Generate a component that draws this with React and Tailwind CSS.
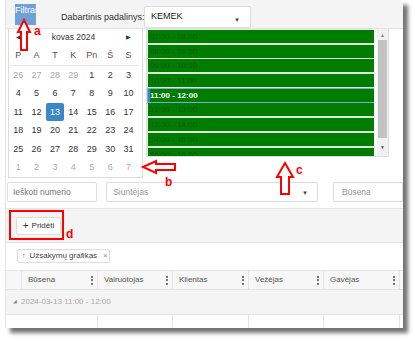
import React from "react";

const weekDays = ["P", "A", "T", "K", "Pn", "Š", "S"];

const days = [
  [26, 27, 28, 29, 1, 2, 3].map((d, i) => ({ d, muted: i < 4 })),
  [4, 5, 6, 7, 8, 9, 10].map((d) => ({ d })),
  [11, 12, 13, 14, 15, 16, 17].map((d) => ({ d, sel: d === 13 })),
  [18, 19, 20, 21, 22, 23, 24].map((d) => ({ d })),
  [25, 26, 27, 28, 29, 30, 31].map((d) => ({ d })),
  [1, 2, 3, 4, 5, 6, 7].map((d) => ({ d, muted: true })),
];

const slots = [
  "07:00 - 08:00",
  "08:00 - 09:00",
  "09:00 - 10:00",
  "10:00 - 11:00",
  "11:00 - 12:00",
  "12:00 - 13:00",
  "13:00 - 14:00",
  "14:00 - 15:00",
  "15:00 - 16:00",
];

const columns = [
  { name: "Būsena", w: "w-[76px]" },
  { name: "Vairuotojas", w: "w-[75px]" },
  { name: "Klientas", w: "w-[76px]" },
  { name: "Vežėjas", w: "w-[75px]" },
  { name: "Gavėjas", w: "w-[76px]" },
];

function Dots() {
  return (
    <span className="flex flex-col gap-[1.5px] mr-[4px]">
      <span className="w-[2px] h-[2px] bg-[#777]" />
      <span className="w-[2px] h-[2px] bg-[#777]" />
      <span className="w-[2px] h-[2px] bg-[#777]" />
    </span>
  );
}

function Caret() {
  return <span className="text-[6px] text-[#444] leading-none">▼</span>;
}

export default function App() {
  return (
    <div
      className="relative w-[415px] h-[341px] bg-white overflow-hidden"
      style={{ fontFamily: '"Liberation Sans", Arial, sans-serif' }}
    >
      {/* SCREENSHOT FRAME */}
      <div className="ml-[5px] w-[398px] h-[328px] bg-white flex flex-col overflow-hidden shadow-[5px_5px_4px_rgba(0,0,0,0.55)] border-l border-[#e4e4e4]">
        {/* TOP BAR */}
        <div className="h-[29px] shrink-0 bg-[#f4f4f4] border-b border-[#e2e2e2] flex items-start">
          <div className="ml-[9px] mt-[4px] w-[21px] h-[21px] bg-[#6fa1d9] overflow-hidden">
            <span className="block text-white text-[9px] leading-[12px] whitespace-nowrap">Filtrai</span>
          </div>
          <span className="ml-[25px] mt-[11px] w-[83px] whitespace-nowrap text-[9px] text-[#333] leading-[12px]">Dabartinis padalinys:</span>
          <div className="mt-[6px] w-[107px] h-[22px] bg-white border border-[#ddd] rounded-[2px] flex items-center justify-between px-[6px]">
            <span className="text-[9px] text-[#222]">KEMEK</span>
            <span className="mr-[4px]">
              <Caret />
            </span>
          </div>
        </div>

        {/* CALENDAR + TIME SLOTS */}
        <div className="flex items-start h-[152px] shrink-0">
          <div className="ml-[2px] w-[135px] h-[149px] border border-t-0 border-[#ddd] pr-[4px]">
            <div className="h-[17px] flex items-center justify-between px-[7px] text-[8.5px] text-[#333]">
              <span className="text-[6px]">◀</span>
              <span>kovas 2024</span>
              <span className="text-[6px]">▶</span>
            </div>
            <div className="h-[20px] grid grid-cols-[repeat(7,18.4px)] items-center border-b border-[#e6e6e6] text-[9px] text-[#555]">
              {weekDays.map((w) => (
                <span key={w} className="text-center">{w}</span>
              ))}
            </div>
            <div className="grid grid-cols-[repeat(7,18.4px)] auto-rows-[18.5px]">
              {days.flat().map((c, i) => (
                <div key={i} className="flex items-center justify-center">
                  <span
                    className={
                      c.sel
                        ? "w-[18px] h-[18px] rounded-[2px] bg-[#3d86c8] text-white text-[9px] flex items-center justify-center"
                        : c.muted
                        ? "text-[9px] text-[#aaa]"
                        : "text-[9px] text-[#333]"
                    }
                  >
                    {c.d}
                  </span>
                </div>
              ))}
            </div>
          </div>

          <div className="ml-[3px] w-[243px] h-[128px] border border-t-0 border-[#ddd] flex overflow-hidden">
            <div className="w-[228px] pt-[1px] pl-[1px] flex flex-col gap-[1.7px] bg-[#dbeedb] overflow-hidden">
              {slots.map((s) => (
                <div
                  key={s}
                  className={
                    s === "11:00 - 12:00"
                      ? "shrink-0 h-[13px] bg-[#007d00] border-l-2 border-[#3d86c8] outline outline-1 outline-[#7fa9d6] text-white text-[8px] leading-[13px] font-bold"
                      : "shrink-0 h-[13px] bg-[#007d00] text-[#0f5a0f] text-[8px] leading-[13px] pl-[2px]"
                  }
                >
                  {s}
                </div>
              ))}
            </div>
            <div className="ml-[3px] w-[11px] flex flex-col items-center bg-[#f1f1f1]">
              <span className="text-[5px] text-[#888] leading-[10px] mt-[1px]">▲</span>
              <div className="w-[9px] h-[98px] bg-[#c3c3c3]" />
              <span className="text-[5px] text-[#555] leading-[10px] mt-[4px]">▼</span>
            </div>
          </div>
        </div>

        {/* FILTERS */}
        <div className="flex items-start pt-[1px] h-[28px] shrink-0 pl-[1px] border-b border-[#e6e6e6]">
          <div className="w-[93px] h-[20px] border border-[#ddd] rounded-[2px] flex items-center px-[5px] text-[8.5px] text-[#777]">
            Ieškoti numerio
          </div>
          <div className="ml-[9px] w-[219px] h-[20px] border border-[#ddd] rounded-[2px] flex items-center justify-between px-[6px] text-[8.5px] text-[#999]">
            <span>Siuntėjas</span>
            <span className="mr-[3px]">
              <Caret />
            </span>
          </div>
          <div className="ml-[15px] w-[70px] shrink-0 h-[20px] border border-[#ddd] rounded-[2px] flex items-center px-[8px] text-[8.5px] text-[#999]">
            Būsena
          </div>
        </div>

        {/* TOOLBAR */}
        <div className="h-[34px] shrink-0 bg-[#f4f4f4] border-b border-[#e2e2e2] flex items-start">
          <div className="ml-[10px] mt-[8px] w-[45px] h-[18px] bg-white border border-[#ddd] rounded-[2px] flex items-center justify-center gap-[3px] text-[8px] text-[#333]">
            <span className="text-[10px] leading-none">+</span>
            <span>Pridėti</span>
          </div>
        </div>

        {/* GROUP CHIP */}
        <div className="h-[27px] shrink-0 flex items-start">
          <div className="ml-[11px] mt-[6px] h-[14px] w-[93px] whitespace-nowrap border border-[#ddd] rounded-[2px] flex items-center gap-[4px] px-[4px] text-[8px] text-[#444]">
            <span className="text-[7px]">↑</span>
            <span>Užsakymų grafikas</span>
            <span className="text-[#888] ml-[2px]">×</span>
          </div>
        </div>

        {/* TABLE HEADER */}
        <div className="h-[20px] shrink-0 flex bg-[#f7f7f7] border-y border-[#e4e4e4]">
          <div className="w-[16px] border-r border-[#e4e4e4]" />
          {columns.map((c) => (
            <div
              key={c.name}
              className={`${c.w} shrink-0 border-r border-[#e4e4e4] flex items-center justify-between pl-[6px] text-[8px] text-[#555]`}
            >
              <span>{c.name}</span>
              <Dots />
            </div>
          ))}
        </div>

        {/* GROUP ROW */}
        <div className="h-[25px] shrink-0 bg-[#f4f4f4] border-b border-[#e4e4e4] flex items-center pl-[7px] gap-[4px] text-[8px] text-[#aaa]">
          <span className="text-[5px] text-[#888]">◢</span>
          <span>2024-03-13 11:00 - 12:00</span>
        </div>

        {/* DATA ROW */}
        <div className="flex-1 flex">
          <div className="w-[16px]" />
          {columns.map((c) => (
            <div key={c.name} className={`${c.w} shrink-0 border-r border-[#e4e4e4]`} />
          ))}
        </div>
      </div>

      {/* ANNOTATIONS */}
      <svg className="absolute left-0 top-0 pointer-events-none" width="415" height="341">
        <polygon
          points="24,20 30,32 27,32 27,50 21,50 21,32 18,32"
          fill="white"
          stroke="#ff0000"
          strokeWidth="2"
        />
        <polygon
          points="143,167 156,161 156,164 175,164 175,170 156,170 156,173"
          fill="white"
          stroke="#ff0000"
          strokeWidth="2"
        />
        <polygon
          points="285,163 293,177 289,177 289,194 281,194 281,177 277,177"
          fill="white"
          stroke="#ff0000"
          strokeWidth="2"
        />
        <rect x="10" y="211" width="53" height="28" fill="none" stroke="#ff0000" strokeWidth="2" />
      </svg>
      <span className="absolute left-[34px] top-[25px] text-[12px] font-bold text-[#ff0000] leading-none">a</span>
      <span className="absolute left-[165px] top-[176px] text-[12px] font-bold text-[#ff0000] leading-none">b</span>
      <span className="absolute left-[296px] top-[164px] text-[12px] font-bold text-[#ff0000] leading-none">c</span>
      <span className="absolute left-[66px] top-[228px] text-[12px] font-bold text-[#ff0000] leading-none">d</span>
    </div>
  );
}
